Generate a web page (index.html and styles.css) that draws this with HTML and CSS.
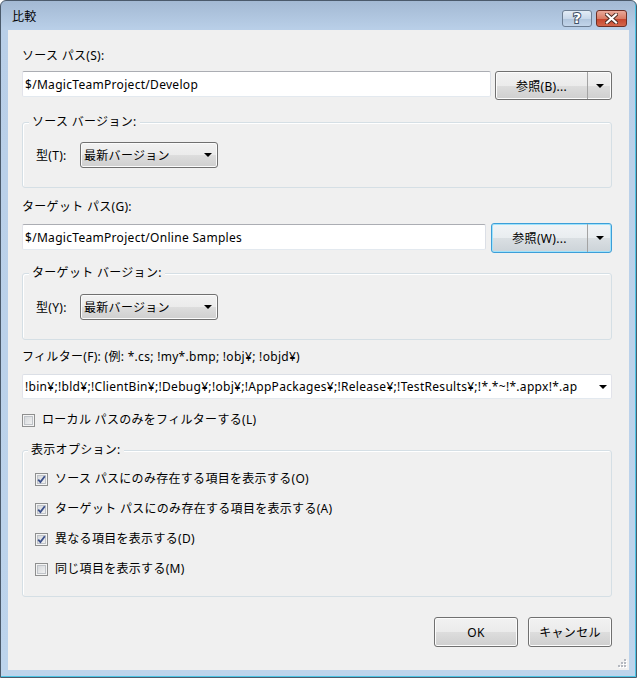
FILE: index.html
```html
<!DOCTYPE html>
<html lang="ja">
<head>
    <meta charset="UTF-8">
    <title>比較</title>
    <link rel="stylesheet" href="styles.css">
</head>
<body>
<div class="window">
    <div class="titlebar">
        <span class="title">比較</span>
        <div class="caption-buttons">
            <span class="cap-btn help">?</span>
            <span class="cap-btn close">
                <svg width="13" height="11" viewBox="0 0 13 11">
                    <path d="M2 1.5 L11 9.5 M11 1.5 L2 9.5" stroke="#4a2a22" stroke-width="4" stroke-linecap="square"/>
                    <path d="M2 1.5 L11 9.5 M11 1.5 L2 9.5" stroke="#fff" stroke-width="2.2" stroke-linecap="square"/>
                </svg>
            </span>
        </div>
    </div>

    <div class="client">
        <div class="label first">ソース パス(S):</div>
        <div class="path-row">
            <div class="textbox">$/MagicTeamProject/Develop</div>
            <div class="split-btn">
                <span class="split-main">参照(B)...</span>
                <span class="split-arrow"><i class="arrow"></i></span>
            </div>
        </div>

        <div class="group version">
            <div class="legend">ソース バージョン:</div>
            <div class="combo-row">
                <span class="combo-label">型(T):</span>
                <div class="combo">
                    <span>最新バージョン</span>
                    <i class="arrow"></i>
                </div>
            </div>
        </div>

        <div class="label second">ターゲット パス(G):</div>
        <div class="path-row target">
            <div class="textbox">$/MagicTeamProject/Online Samples</div>
            <div class="split-btn focused">
                <span class="split-main">参照(W)...</span>
                <span class="split-arrow"><i class="arrow"></i></span>
            </div>
        </div>

        <div class="group version target-version">
            <div class="legend">ターゲット バージョン:</div>
            <div class="combo-row">
                <span class="combo-label">型(Y):</span>
                <div class="combo">
                    <span>最新バージョン</span>
                    <i class="arrow"></i>
                </div>
            </div>
        </div>

        <div class="label filter-label">フィルター(F): (例: *.cs; !my*.bmp; !obj¥; !objd¥)</div>
        <div class="filter-box">
            <span class="filter-text">!bin¥;!bld¥;!ClientBin¥;!Debug¥;!obj¥;!AppPackages¥;!Release¥;!TestResults¥;!*.*~!*.appx!*.ap</span>
            <i class="arrow"></i>
        </div>

        <div class="check-row local">
            <span class="checkbox"></span>
            <span>ローカル パスのみをフィルターする(L)</span>
        </div>

        <div class="group options">
            <div class="legend">表示オプション:</div>
            <div class="option-list">
                <div class="check-row">
                    <span class="checkbox checked"><svg width="9" height="9" viewBox="0 0 9 9"><path d="M1.2 4.6 L3.4 7 L7.8 1.2" fill="none" stroke="#3b4f8a" stroke-width="1.8"/></svg></span>
                    <span>ソース パスにのみ存在する項目を表示する(O)</span>
                </div>
                <div class="check-row">
                    <span class="checkbox checked"><svg width="9" height="9" viewBox="0 0 9 9"><path d="M1.2 4.6 L3.4 7 L7.8 1.2" fill="none" stroke="#3b4f8a" stroke-width="1.8"/></svg></span>
                    <span>ターゲット パスにのみ存在する項目を表示する(A)</span>
                </div>
                <div class="check-row">
                    <span class="checkbox checked"><svg width="9" height="9" viewBox="0 0 9 9"><path d="M1.2 4.6 L3.4 7 L7.8 1.2" fill="none" stroke="#3b4f8a" stroke-width="1.8"/></svg></span>
                    <span>異なる項目を表示する(D)</span>
                </div>
                <div class="check-row">
                    <span class="checkbox"></span>
                    <span>同じ項目を表示する(M)</span>
                </div>
            </div>
        </div>

        <div class="dialog-buttons">
            <span class="button">OK</span>
            <span class="button">キャンセル</span>
        </div>

        <svg class="grip" width="10" height="10" viewBox="0 0 10 10">
            <g fill="#fff">
                <rect x="8" y="2" width="2" height="2"/>
                <rect x="5" y="5" width="2" height="2"/><rect x="8" y="5" width="2" height="2"/>
                <rect x="2" y="8" width="2" height="2"/><rect x="5" y="8" width="2" height="2"/><rect x="8" y="8" width="2" height="2"/>
            </g>
            <g fill="#b5b9c0">
                <rect x="7" y="1" width="2" height="2"/>
                <rect x="4" y="4" width="2" height="2"/><rect x="7" y="4" width="2" height="2"/>
                <rect x="1" y="7" width="2" height="2"/><rect x="4" y="7" width="2" height="2"/><rect x="7" y="7" width="2" height="2"/>
            </g>
        </svg>
    </div>
</div>
</body>
</html>
```

FILE: styles.css
```css
body {
    margin: 0;
    font-family: "Noto Sans", "Noto Sans CJK JP", sans-serif;
    font-size: 12px;
    letter-spacing: 0.3px;
    color: #000;
    background: #fff;
}
.window {
    width: 637px;
    height: 678px;
    box-sizing: border-box;
    border: 1px solid #4b5a6b;
    border-radius: 6px 6px 0 0;
    background: linear-gradient(#a3b9d3, #b9cfe8 28px, #bdd4ec);
    box-shadow: inset -1px -1px 0 #4cc4e4;
    display: flex;
    flex-direction: column;
}
.titlebar {
    height: 29px;
    display: flex;
    justify-content: space-between;
    align-items: flex-start;
}
.title {
    margin: 7px 0 0 11px;
    line-height: 18px;
}
.caption-buttons {
    display: flex;
    gap: 4px;
    margin: 9px 9px 0 0;
}
.cap-btn {
    height: 17px;
    box-sizing: border-box;
    border: 1px solid #6d7e93;
    border-radius: 3px;
    display: flex;
    align-items: center;
    justify-content: center;
}
.help {
    width: 30px;
    background: linear-gradient(#e3ecf6, #c9d8ea 50%, #afc4dc 51%, #c3d5ea);
    color: #fff;
    font-family: "DejaVu Sans", sans-serif;
    font-weight: bold;
    font-size: 14px;
    line-height: 15px;
    letter-spacing: 0;
    -webkit-text-stroke: 2px #3f5067;
    paint-order: stroke fill;
}
.close {
    width: 31px;
    border-color: #6e2f25;
    background: linear-gradient(#e9a99a, #d97c65 50%, #c5432b 51%, #d4674c);
}
.client {
    position: relative;
    margin: 0 7px;
    height: 640px;
    box-sizing: border-box;
    background: #f0f0f0;
    padding: 0 17px 0 14px;
}
.label {
    line-height: 16px;
}
.label.first {
    padding-top: 18px;
}
.label.second {
    margin-top: 11px;
}
.path-row {
    display: flex;
    align-items: flex-start;
    gap: 4px;
    margin-top: 7px;
}
.path-row.target {
    gap: 5px;
    margin-top: 8px;
}
.textbox {
    flex: 1;
    height: 26px;
    box-sizing: border-box;
    border: 1px solid;
    border-color: #abadb3 #dbdfe6 #e3e9ef #e2e3ea;
    border-radius: 2px;
    background: #fff;
    padding: 0 2px;
    display: flex;
    align-items: center;
}
.target .textbox {
    margin-top: 1px;
}
.split-btn {
    width: 117px;
    height: 29px;
    box-sizing: border-box;
    display: flex;
    border: 1px solid #707070;
    border-radius: 3px;
    background: linear-gradient(#f2f2f2, #ebebeb 50%, #dddddd 51%, #cfcfcf);
    box-shadow: inset 0 0 0 1px #fcfcfc;
}
.split-btn.focused {
    width: 121px;
    height: 30px;
    border-color: #3c9ed8;
    box-shadow: inset 0 0 0 1px #9fe2fb;
    background: linear-gradient(#f1f4f6, #e9edf0 50%, #dadfe3 51%, #ccd3d8);
}
.split-main {
    flex: 1;
    display: flex;
    align-items: center;
    justify-content: center;
}
.split-arrow {
    width: 23px;
    border-left: 1px solid #a3a3a3;
    display: flex;
    align-items: center;
    justify-content: center;
}
.arrow {
    width: 0;
    height: 0;
    border-left: 4px solid transparent;
    border-right: 4px solid transparent;
    border-top: 4px solid #000;
}
.group {
    border: 1px solid #d5dfe5;
    border-radius: 3px;
    box-shadow: inset 1px 1px 0 #fff;
    box-sizing: border-box;
    padding-left: 13px;
}
.group.version {
    margin-top: 22px;
    height: 66px;
}
.group.target-version {
    margin-top: 20px;
    height: 67px;
}
.legend {
    width: fit-content;
    margin: -9px 0 0 -7px;
    padding: 0 3px;
    background: #f0f0f0;
    line-height: 16px;
}
.combo-row {
    display: flex;
    align-items: center;
    margin-top: 12px;
}
.target-version .combo-row {
    margin-top: 13px;
}
.combo-label {
    width: 44px;
}
.combo {
    width: 138px;
    height: 26px;
    box-sizing: border-box;
    border: 1px solid #707070;
    border-radius: 3px;
    background: linear-gradient(#f2f2f2, #ebebeb 50%, #dddddd 51%, #cfcfcf);
    box-shadow: inset 0 0 0 1px #fbfbfb;
    display: flex;
    align-items: center;
    justify-content: space-between;
    padding: 0 5px 0 3px;
}
.filter-label {
    margin-top: 9px;
}
.filter-box {
    margin-top: 9px;
    height: 25px;
    box-sizing: border-box;
    border: 1px solid;
    border-color: #dbdfe6 #e2e3ea #e3e9ef #e2e3ea;
    border-radius: 2px;
    background: #fff;
    display: flex;
    align-items: center;
    padding: 0 4px 0 2px;
    gap: 5px;
}
.filter-text {
    flex: 1;
    white-space: nowrap;
    overflow: hidden;
}
.check-row {
    display: flex;
    align-items: center;
    gap: 7px;
    line-height: 16px;
}
.check-row.local {
    margin-top: 13px;
}
.checkbox {
    width: 13px;
    height: 13px;
    box-sizing: border-box;
    border: 1px solid #8e8f8f;
    background: linear-gradient(135deg, #cfd2d6, #f7f7f7);
    box-shadow: inset 0 0 0 1px #f4f4f4, inset 0 0 0 2px #bfc3c8;
    display: flex;
    align-items: center;
    justify-content: center;
}
.group.options {
    margin-top: 22px;
    height: 147px;
    padding-left: 12px;
}
.option-list {
    display: flex;
    flex-direction: column;
    gap: 14px;
    margin-top: 13px;
}
.dialog-buttons {
    display: flex;
    justify-content: flex-end;
    gap: 10px;
    margin-top: 20px;
}
.button {
    width: 84px;
    height: 30px;
    box-sizing: border-box;
    border: 1px solid #707070;
    border-radius: 3px;
    background: linear-gradient(#f2f2f2, #ebebeb 50%, #dddddd 51%, #cfcfcf);
    box-shadow: inset 0 0 0 1px #fcfcfc;
    display: flex;
    align-items: center;
    justify-content: center;
}
.grip {
    position: absolute;
    right: 2px;
    bottom: 2px;
}
```
